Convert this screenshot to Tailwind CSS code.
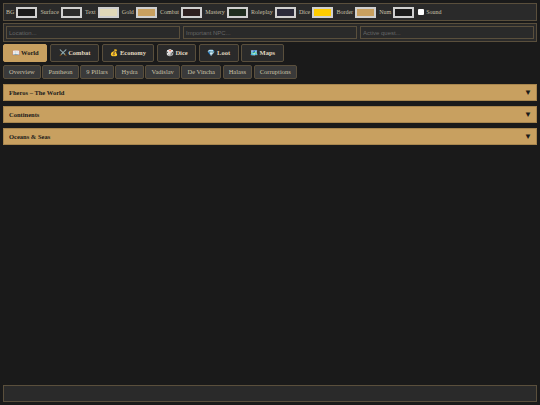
<!DOCTYPE html>
<html lang="en">
  <head>
    <meta charset="UTF-8" />
    <title>Fheros Campaign</title>
    <script src="https://cdn.jsdelivr.net/npm/@tailwindcss/browser@4"></script>
  </head>
  <body class="bg-[#1a1a1a] font-['Liberation_Serif',serif] text-[#e0d8c0] h-[405px] w-[540px] overflow-hidden">
    <div class="flex flex-col h-full p-[3px]">
      <!-- Theme bar -->
      <div class="flex items-center h-[18px] px-[2px] border border-[#5a4f3c] bg-[#2a2a2a] text-[6px] text-[#c8c0a8]">
        <span>BG</span>
        <span class="ml-[2px] w-[21px] h-[11px] border-2 border-[#d0d0d0] bg-[#1a1a1a]"></span>
        <span class="ml-[3.2px]">Surface</span>
        <span class="ml-[2px] w-[21px] h-[11px] border-2 border-[#d0d0d0] bg-[#2a2a2a]"></span>
        <span class="ml-[3.2px]">Text</span>
        <span class="ml-[2px] w-[21px] h-[11px] border-2 border-[#d0d0d0] bg-[#e0d8b8]"></span>
        <span class="ml-[3.2px]">Gold</span>
        <span class="ml-[2px] w-[21px] h-[11px] border-2 border-[#d0d0d0] bg-[#c8a060]"></span>
        <span class="ml-[3.2px]">Combat</span>
        <span class="ml-[2px] w-[21px] h-[11px] border-2 border-[#d0d0d0] bg-[#2d1f1f]"></span>
        <span class="ml-[3.2px]">Mastery</span>
        <span class="ml-[2px] w-[21px] h-[11px] border-2 border-[#d0d0d0] bg-[#1f2d1f]"></span>
        <span class="ml-[3.2px]">Roleplay</span>
        <span class="ml-[2px] w-[21px] h-[11px] border-2 border-[#d0d0d0] bg-[#2a2a3a]"></span>
        <span class="ml-[3.2px]">Dice</span>
        <span class="ml-[2px] w-[21px] h-[11px] border-2 border-[#d0d0d0] bg-[#ffcc00]"></span>
        <span class="ml-[3.2px]">Border</span>
        <span class="ml-[2px] w-[21px] h-[11px] border-2 border-[#d0d0d0] bg-[#c8a060]"></span>
        <span class="ml-[3.2px]">Num</span>
        <span class="ml-[2px] w-[21px] h-[11px] border-2 border-[#d0d0d0] bg-[#1a1a1a]"></span>
        <span class="ml-[4px] w-[6px] h-[6px] bg-white rounded-[1px]"></span>
        <span class="ml-[2px]">Sound</span>
      </div>

      <!-- Quest inputs -->
      <div class="flex gap-[3px] mt-[2px] h-[19px] items-center px-[2px] border border-[#5a4f3c] bg-[#2a2a2a]">
        <input placeholder="Location..." class="flex-1 min-w-0 h-[13px] px-[2px] text-[6px] border border-[#5a4f3c] bg-[#2a2a2a] placeholder:text-[#666] font-['Liberation_Sans',sans-serif]" />
        <input placeholder="Important NPC..." class="flex-1 min-w-0 h-[13px] px-[2px] text-[6px] border border-[#5a4f3c] bg-[#2a2a2a] placeholder:text-[#666] font-['Liberation_Sans',sans-serif]" />
        <input placeholder="Active quest..." class="flex-1 min-w-0 h-[13px] px-[2px] text-[6px] border border-[#5a4f3c] bg-[#2a2a2a] placeholder:text-[#666] font-['Liberation_Sans',sans-serif]" />
      </div>

      <!-- Main tabs -->
      <div class="flex gap-[2.8px] mt-[2px] text-[6.5px] font-bold">
        <button class="h-[18px] px-[7.5px] rounded-[2px] border border-[#c8a060] bg-[#c8a060] text-[#1a1a1a]">📖 World</button>
        <button class="h-[18px] px-[7.5px] rounded-[2px] border border-[#5a4f3c] bg-[#2a2a2a]">⚔️ Combat</button>
        <button class="h-[18px] px-[7.5px] rounded-[2px] border border-[#5a4f3c] bg-[#2a2a2a]">💰 Economy</button>
        <button class="h-[18px] px-[7.5px] rounded-[2px] border border-[#5a4f3c] bg-[#2a2a2a]">🎲 Dice</button>
        <button class="h-[18px] px-[7.5px] rounded-[2px] border border-[#5a4f3c] bg-[#2a2a2a]">💎 Loot</button>
        <button class="h-[18px] px-[7.5px] rounded-[2px] border border-[#5a4f3c] bg-[#2a2a2a]">🗺️ Maps</button>
      </div>

      <!-- Sub tabs -->
      <div class="flex gap-[1.5px] mt-[3px] text-[6.5px] text-[#c8c0a8]">
        <button class="h-[14px] px-[5.1px] rounded-[2px] border border-[#5a4f3c] bg-[#3a3a3a]">Overview</button>
        <button class="h-[14px] px-[5.1px] rounded-[2px] border border-[#5a4f3c] bg-[#3a3a3a]">Pantheon</button>
        <button class="h-[14px] px-[5.1px] rounded-[2px] border border-[#5a4f3c] bg-[#3a3a3a]">9 Pillars</button>
        <button class="h-[14px] px-[5.1px] rounded-[2px] border border-[#5a4f3c] bg-[#3a3a3a]">Hydra</button>
        <button class="h-[14px] px-[5.1px] rounded-[2px] border border-[#5a4f3c] bg-[#3a3a3a]">Vadislav</button>
        <button class="h-[14px] px-[5.1px] rounded-[2px] border border-[#5a4f3c] bg-[#3a3a3a]">De Vincha</button>
        <button class="h-[14px] px-[5.1px] rounded-[2px] border border-[#5a4f3c] bg-[#3a3a3a]">Halass</button>
        <button class="h-[14px] px-[5.1px] rounded-[2px] border border-[#5a4f3c] bg-[#3a3a3a]">Corruptions</button>
      </div>

      <!-- Sections -->
      <div class="flex flex-col gap-[5px] mt-[5px] text-[6.5px] font-bold text-[#1a1a1a]">
        <div class="flex justify-between items-center h-[17px] pl-[5px] pr-[4px] bg-[#c8a060] border border-[#a8864e]"><span>Fheros – The World</span><span class="text-[8px]">▼</span></div>
        <div class="flex justify-between items-center h-[17px] pl-[5px] pr-[4px] bg-[#c8a060] border border-[#a8864e]"><span>Continents</span><span class="text-[8px]">▼</span></div>
        <div class="flex justify-between items-center h-[17px] pl-[5px] pr-[4px] bg-[#c8a060] border border-[#a8864e]"><span>Oceans &amp; Seas</span><span class="text-[8px]">▼</span></div>
      </div>

      <!-- Notes -->
      <div class="mt-auto h-[17px] border border-[#5a4f3c] bg-[#2a2a2a]"></div>
    </div>
  </body>
</html>
